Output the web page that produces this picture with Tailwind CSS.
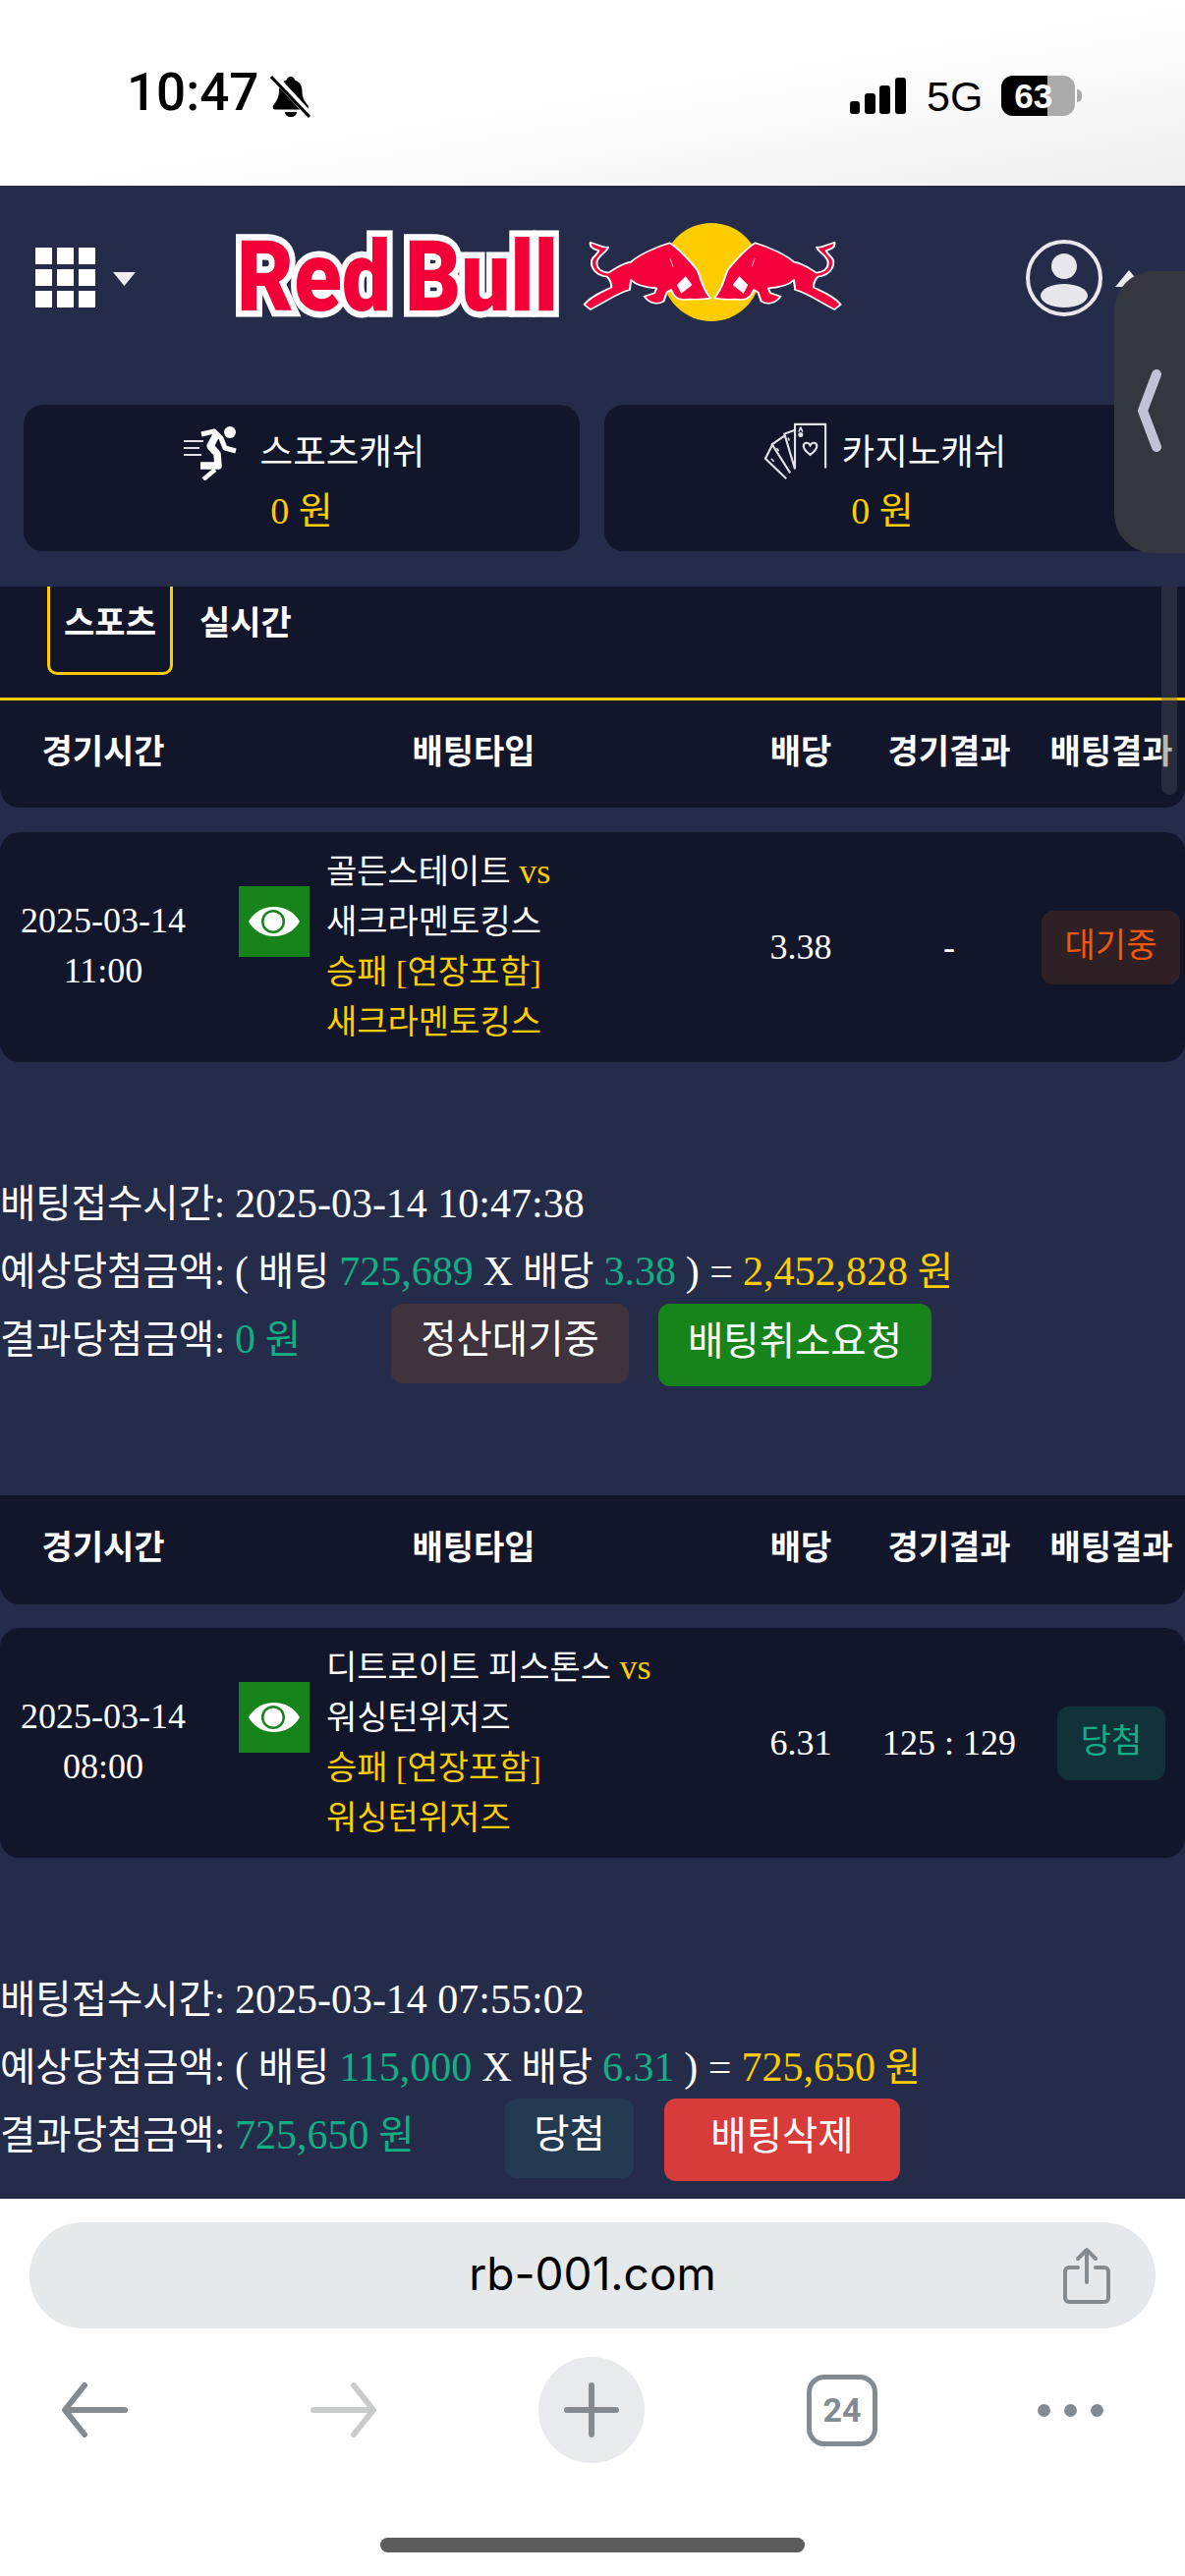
<!DOCTYPE html>
<html lang="ko">
<head>
    <meta charset="UTF-8">
    <meta name="viewport" content="width=device-width, initial-scale=1.0">
    <title>Red Bull</title>
    <script src="https://cdn.jsdelivr.net/npm/@tailwindcss/browser@4"></script>
</head>
<body class="relative w-[1206px] h-[2622px] overflow-hidden bg-white font-['Liberation_Serif','Noto_Sans_CJK_KR',serif] text-white">

    <!-- status bar -->
    <div class="h-[189px] flex bg-linear-to-br from-white via-white to-[#efefef] text-black font-['Liberation_Sans',sans-serif]">
        <div class="ml-[129px] mt-[62px] h-[64px] text-[53px] leading-[64px] font-medium font-['Roboto',sans-serif]">10:47</div>
        <svg class="ml-[12px] mt-[76px] w-[42px] h-[44px]" viewBox="0 0 42 44">
            <path d="M21 2c2 0 3.500 1.500 4 3.500 5 1.500 7.500 6 7.500 11 0 7 2 10 6 15 1 2 0 4-2 4H5c-2 0-3-2-2-4 3-4 6-8 6-15 0-5 2.500-9.500 7.500-11C17 3.500 19 2 21 2z M15 38h12c0 3-2.500 5-6 5s-6-2-6-5z" fill="#000"/>
            <path d="M3 1 41 42" stroke="#fff" stroke-width="7"/>
            <path d="M1 2 40 43" stroke="#000" stroke-width="3"/>
        </svg>
        <div class="ml-[548px] mt-[79px] h-[37px] flex items-end gap-[4.500px]">
            <div class="w-[10px] h-[13px] rounded-[3px] bg-black"></div>
            <div class="w-[11px] h-[21px] rounded-[3px] bg-black"></div>
            <div class="w-[11px] h-[29px] rounded-[3px] bg-black"></div>
            <div class="w-[11px] h-[37px] rounded-[3px] bg-black"></div>
        </div>
        <div class="ml-[21px] mt-[73px] text-[43px] leading-[50px]">5G</div>
        <div class="relative ml-[19px] mt-[77px] w-[75px] h-[41px] rounded-[12px] overflow-hidden bg-[#aaaaaa]">
            <div class="w-[47px] h-full bg-black"></div>
            <div class="absolute inset-0 pl-[13px] text-[35px] leading-[41px] font-bold text-white">63</div>
        </div>
        <div class="ml-[2px] mt-[91px] w-[5px] h-[13px] rounded-r-full bg-[#aaaaaa]"></div>
    </div>

    <!-- page header + balance cards -->
    <div class="h-[408px] bg-[#252c49]">
        <div class="h-[100px] pt-0 flex items-start translate-y-[38px]">
            <div class="ml-[36px] mt-[25px] grid grid-cols-3 gap-x-[5px] gap-y-[5px] w-[61px]">
                <div class="h-[17px] bg-white"></div><div class="h-[17px] bg-white"></div><div class="h-[17px] bg-white"></div>
                <div class="h-[17px] bg-white"></div><div class="h-[17px] bg-white"></div><div class="h-[17px] bg-white"></div>
                <div class="h-[17px] bg-white"></div><div class="h-[17px] bg-white"></div><div class="h-[17px] bg-white"></div>
            </div>
            <svg class="ml-[18px] mt-[50px] w-[23px] h-[14px]" viewBox="0 0 23 14"><path d="M0 0h23L11.500 14z" fill="#eceef2"/></svg>
            <!-- logo -->
            <svg class="ml-[98px] w-[624px] h-[104px]" viewBox="236 227 624 104">
                <g font-family="Roboto, 'Liberation Sans', sans-serif" font-weight="900" font-size="100" fill="#f30039" stroke="#fff" stroke-width="13" stroke-linejoin="miter" paint-order="stroke">
                    <text x="241" y="316" textLength="157" lengthAdjust="spacingAndGlyphs">Red</text>
                    <text x="412" y="316" textLength="156" lengthAdjust="spacingAndGlyphs">Bull</text>
                </g>
                <circle cx="724" cy="277" r="50" fill="#ffcc00"/>
                <g transform="translate(220 210) scale(.4209 .3333)">
                    <g fill="#f5003c" stroke="#fff" stroke-width="5" stroke-linejoin="round">
                        <path d="M905 110C925 118 935 128 948 125C945 140 925 148 921 168C918 188 930 200 948 203C965 190 980 175 1003 170C1022 148 1062 125 1097 112C1118 128 1142 162 1162 192C1172 215 1172 245 1195 280C1175 288 1150 282 1130 285C1115 285 1105 272 1100 255L1090 262L1082 290C1070 300 1050 300 1035 275L1060 265L1065 250C1040 248 1015 240 1003 225L1000 255C975 262 950 285 905 315L890 300C905 275 935 260 955 248C957 235 950 220 945 215C920 212 905 190 908 165C912 150 925 145 925 135C915 132 902 125 905 110Z"/>
                        <path d="M1135 215L1150 240L1125 265L1115 240Z M1098 160L1105 185" fill="#fff" stroke-width="2"/>
                    </g>
                    <g transform="matrix(-1 0 0 1 2400 0)" fill="#f5003c" stroke="#fff" stroke-width="5" stroke-linejoin="round">
                        <path d="M905 110C925 118 935 128 948 125C945 140 925 148 921 168C918 188 930 200 948 203C965 190 980 175 1003 170C1022 148 1062 125 1097 112C1118 128 1142 162 1162 192C1172 215 1172 245 1195 280C1175 288 1150 282 1130 285C1115 285 1105 272 1100 255L1090 262L1082 290C1070 300 1050 300 1035 275L1060 265L1065 250C1040 248 1015 240 1003 225L1000 255C975 262 950 285 905 315L890 300C905 275 935 260 955 248C957 235 950 220 945 215C920 212 905 190 908 165C912 150 925 145 925 135C915 132 902 125 905 110Z"/>
                        <path d="M1135 215L1150 240L1125 265L1115 240Z M1098 160L1105 185" fill="#fff" stroke-width="2"/>
                    </g>
                </g>
            </svg>
            <svg class="ml-[183px] mt-[16px] w-[80px] h-[80px]" viewBox="0 0 80 80">
                <circle cx="40" cy="40" r="37" fill="none" stroke="#e8e8ec" stroke-width="4"/>
                <circle cx="40" cy="28" r="13" fill="#e8e8ec"/>
                <ellipse cx="40" cy="58" rx="24" ry="12" fill="#e8e8ec"/>
            </svg>
            <svg class="ml-[12px] mt-[48px] w-[28px] h-[17px]" viewBox="0 0 28 17"><path d="M14 0L28 17H0z" fill="#eceef2"/></svg>
        </div>

        <div class="mt-[123px] pl-[24px] flex gap-[25px]">
            <div class="w-[566px] h-[149px] rounded-[20px] bg-[#11162b] flex flex-col items-center">
                <div class="ml-[5px] mt-[21px] h-[56px] flex items-center gap-[21px]">
                    <svg class="w-[57px] h-[56px]" viewBox="18 10 57 56" fill="none" stroke="#fff">
                        <circle cx="65" cy="17" r="6" fill="#fff" stroke="none"/>
                        <path d="M18 26h20M18 33h16M18 40h18" stroke-width="2.200" stroke="#e2e3e8"/>
                        <path d="M36 19l13-3 7 7 4 10 11 3" stroke-width="5" stroke-linejoin="round"/>
                        <path d="M52 18l-7 13 7 8 1 12H35" stroke-width="7.500" stroke-linejoin="round"/>
                        <path d="M50 55L38 65" stroke-width="4.500"/>
                    </svg>
                    <span class="text-[36.500px] leading-[50px]">스포츠캐쉬</span>
                </div>
                <div class="mt-[6px] text-[38px] leading-[50px] text-[#ffcc00]">0 원</div>
            </div>
            <div class="w-[566px] h-[149px] rounded-[20px] bg-[#11162b] flex flex-col items-center">
                <div class="ml-[5px] mt-[21px] h-[56px] flex items-center gap-[14px]">
                    <svg class="w-[66px] h-[66px]" viewBox="10 8 68 66" fill="none" stroke="#e2e3e8" stroke-width="2.200">
                        <path d="M43 57V11H75V57"/>
                        <path d="M43 17L32 21L43 58M32 23L19 32L38 62M19 33L12 47L34 68"/>
                        <path d="M59 43c-5-4-7-6-7-9 0-4 5-5 7-1 2-4 7-3 7 1 0 3-2 5-7 9z"/>
                        <path d="M49 14l2 5M49 14l-2 5M36 25l1 3M24 36l2 3M18 47l3 3" stroke-width="1.600"/>
                        <circle cx="49" cy="22" r="1.500" fill="#e2e3e8"/>
                    </svg>
                    <span class="text-[36.500px] leading-[50px]">카지노캐쉬</span>
                </div>
                <div class="mt-[6px] text-[38px] leading-[50px] text-[#ffcc00]">0 원</div>
            </div>
        </div>
    </div>

    <!-- scrolling content -->
    <div class="relative h-[1641px] overflow-hidden bg-[#252c49]">
        <div class="h-[113px] bg-[#11162b] pl-[48px] flex items-start">
            <div class="w-[128px] h-[90px] border-x-[3px] border-b-[3px] border-[#ffcc00] rounded-b-[10px] text-center text-[34px] font-bold leading-[76px]">스포츠</div>
            <div class="ml-[27px] text-[34px] font-bold leading-[76px]">실시간</div>
        </div>
        <div class="h-[3px] bg-[#ffcc00]"></div>
        <div class="h-[109px] rounded-b-[20px] bg-[#11162b] grid grid-cols-[210px_544px_122px_180px_150px] text-center text-[34px] font-bold leading-[106px]">
            <div>경기시간</div><div>배팅타입</div><div>배당</div><div>경기결과</div><div>배팅결과</div>
        </div>

        <div class="mt-[25px] h-[234px] rounded-[20px] bg-[#11162b] grid grid-cols-[210px_544px_122px_180px_150px] items-center text-center text-[34px] leading-[51px]">
            <div class="-mt-[2px] text-[36px]">2025-03-14<br>11:00</div>
            <div class="flex items-start text-left">
                <div class="ml-[33px] mt-[39px] w-[72px] h-[72px] bg-[#16841b] flex items-center justify-center">
                    <svg class="w-[54px] h-[40px]" viewBox="0 0 54 40"><path d="M1 20C12 0 42 0 53 20C42 40 12 40 1 20Z" fill="#fff"/><circle cx="26" cy="20" r="12" fill="#16841b"/><circle cx="26" cy="20" r="9.500" fill="#fff"/></svg>
                </div>
                <div class="ml-[17px] -mt-[1px]">
                    <div>골든스테이트 <span class="text-[#ffcc00] text-[36px]">vs</span></div>
                    <div>새크라멘토킹스</div>
                    <div class="text-[#ffcc00]">승패 [연장포함]</div>
                    <div class="text-[#ffcc00]">새크라멘토킹스</div>
                </div>
            </div>
            <div class="text-[36px]">3.38</div>
            <div class="text-[36px]">-</div>
            <div class="ml-[4px] w-[141px] h-[75px] rounded-[12px] bg-[#2f2025] text-[#f1580e] leading-[72px]">대기중</div>
        </div>

        <div class="pt-[110px] text-[39.500px] leading-[68px]">
            <div>배팅접수시간: <span class="text-[42px]">2025-03-14 10:47:38</span></div>
            <div>예상당첨금액: <span class="text-[42px]">(</span> 배팅 <span class="text-[42px] text-[#12ae85]">725,689</span> <span class="text-[42px]">X</span> 배당 <span class="text-[42px] text-[#12ae85]">3.38</span> <span class="text-[42px]">) =</span> <span class="text-[#ffcc00]"><span class="text-[42px]">2,452,828</span> 원</span></div>
            <div class="h-[68px] flex items-start">
                <div class="w-[398px]">결과당첨금액: <span class="text-[#12ae85]"><span class="text-[42px]">0</span> 원</span></div>
                <div class="-mt-[2px] w-[242px] h-[81px] rounded-[12px] bg-[#3f333d] text-center leading-[74px]">정산대기중</div>
                <div class="-mt-[2px] ml-[30px] w-[278px] h-[84px] rounded-[12px] bg-[#16841b] text-center leading-[78px]">배팅취소요청</div>
            </div>
        </div>

        <div class="mt-[125px] h-[111px] rounded-b-[20px] bg-[#11162b] grid grid-cols-[210px_544px_122px_180px_150px] text-center text-[34px] font-bold leading-[108px]">
            <div>경기시간</div><div>배팅타입</div><div>배당</div><div>경기결과</div><div>배팅결과</div>
        </div>

        <div class="mt-[24px] h-[234px] rounded-[20px] bg-[#11162b] grid grid-cols-[210px_544px_122px_180px_150px] items-center text-center text-[34px] leading-[51px]">
            <div class="-mt-[2px] text-[36px]">2025-03-14<br>08:00</div>
            <div class="flex items-start text-left">
                <div class="ml-[33px] mt-[39px] w-[72px] h-[72px] bg-[#16841b] flex items-center justify-center">
                    <svg class="w-[54px] h-[40px]" viewBox="0 0 54 40"><path d="M1 20C12 0 42 0 53 20C42 40 12 40 1 20Z" fill="#fff"/><circle cx="26" cy="20" r="12" fill="#16841b"/><circle cx="26" cy="20" r="9.500" fill="#fff"/></svg>
                </div>
                <div class="ml-[17px] -mt-[1px]">
                    <div>디트로이트 피스톤스 <span class="text-[#ffcc00] text-[36px]">vs</span></div>
                    <div>워싱턴위저즈</div>
                    <div class="text-[#ffcc00]">승패 [연장포함]</div>
                    <div class="text-[#ffcc00]">워싱턴위저즈</div>
                </div>
            </div>
            <div class="text-[36px]">6.31</div>
            <div class="text-[36px]">125 : 129</div>
            <div class="ml-[20px] w-[110px] h-[75px] rounded-[12px] bg-[#12323a] text-[#12ae85] leading-[72px]">당첨</div>
        </div>

        <div class="pt-[110px] text-[39.500px] leading-[68px]">
            <div>배팅접수시간: <span class="text-[42px]">2025-03-14 07:55:02</span></div>
            <div>예상당첨금액: <span class="text-[42px]">(</span> 배팅 <span class="text-[42px] text-[#12ae85]">115,000</span> <span class="text-[42px]">X</span> 배당 <span class="text-[42px] text-[#12ae85]">6.31</span> <span class="text-[42px]">) =</span> <span class="text-[#ffcc00]"><span class="text-[42px]">725,650</span> 원</span></div>
            <div class="h-[68px] flex items-start">
                <div class="w-[514px]">결과당첨금액: <span class="text-[#12ae85]"><span class="text-[42px]">725,650</span> 원</span></div>
                <div class="-mt-[3px] w-[131px] h-[81px] rounded-[12px] bg-[#243a50] text-center leading-[74px]">당첨</div>
                <div class="-mt-[3px] ml-[31px] w-[240px] h-[84px] rounded-[12px] bg-[#d83c3a] text-center leading-[78px]">배팅삭제</div>
            </div>
        </div>

        <!-- scrollbar -->
        <div class="absolute left-[1182px] top-0 w-[16px] h-[212px] rounded-b-full bg-[#4a4d58]/40"></div>
    </div>

    <!-- browser chrome -->
    <div class="h-[384px] bg-white pt-[24px]">
        <div class="relative mx-[30px] h-[108px] rounded-full bg-[#e6e9ec] flex items-center justify-center">
            <span class="-mt-[4px] text-[46px] text-black font-['Inter','Liberation_Sans',sans-serif]">rb-001.com</span>
            <svg class="absolute left-[1052px] top-[25px] w-[48px] h-[58px]" viewBox="0 0 48 58" fill="none" stroke="#848b90" stroke-width="4" stroke-linecap="round" stroke-linejoin="round">
                <path d="M15 21H6a4 4 0 0 0-4 4v27a4 4 0 0 0 4 4h36a4 4 0 0 0 4-4V25a4 4 0 0 0-4-4h-9"/>
                <path d="M24 36V3M15 12l9-9 9 9"/>
            </svg>
        </div>
        <div class="mt-[29px] h-[108px] flex items-center">
            <svg class="ml-[62px] w-[68px] h-[56px]" viewBox="0 0 68 56" fill="none" stroke="#848b90" stroke-width="6" stroke-linecap="round" stroke-linejoin="round"><path d="M65 28H5M24 3L4 28l20 25"/></svg>
            <svg class="ml-[186px] w-[68px] h-[56px]" viewBox="0 0 68 56" fill="none" stroke="#c9cbcd" stroke-width="6" stroke-linecap="round" stroke-linejoin="round"><path d="M3 28h60M44 3l20 25-20 25"/></svg>
            <div class="ml-[164px] w-[108px] h-[108px] rounded-full bg-[#e9eaee] flex items-center justify-center">
                <svg class="w-[56px] h-[56px]" viewBox="0 0 56 56" fill="none" stroke="#848b90" stroke-width="6" stroke-linecap="round"><path d="M28 3v50M3 28h50"/></svg>
            </div>
            <div class="ml-[165px] w-[72px] h-[73px] rounded-[18px] border-[5px] border-[#848b90] flex items-center justify-center text-[34px] font-bold text-[#848b90] font-['Roboto',sans-serif]">24</div>
            <div class="ml-[163px] flex gap-[14px]">
                <div class="w-[13px] h-[13px] rounded-full bg-[#848b90]"></div>
                <div class="w-[13px] h-[13px] rounded-full bg-[#848b90]"></div>
                <div class="w-[13px] h-[13px] rounded-full bg-[#848b90]"></div>
            </div>
        </div>
        <div class="mt-[76px] ml-[387px] w-[432px] h-[15px] rounded-full bg-[#5c5c5c]"></div>
    </div>

    <!-- side drawer handle -->
    <div class="absolute left-[1134px] top-[276px] w-[72px] h-[287px] rounded-l-[40px] bg-[#35373f] flex items-center">
        <svg class="ml-[22px] -mt-[4px] w-[28px] h-[84px]" viewBox="0 0 28 84" fill="none" stroke="#c0c2d6" stroke-width="10" stroke-linecap="round" stroke-linejoin="round"><path d="M21 5L7 42l14 37"/></svg>
    </div>
</body>
</html>
